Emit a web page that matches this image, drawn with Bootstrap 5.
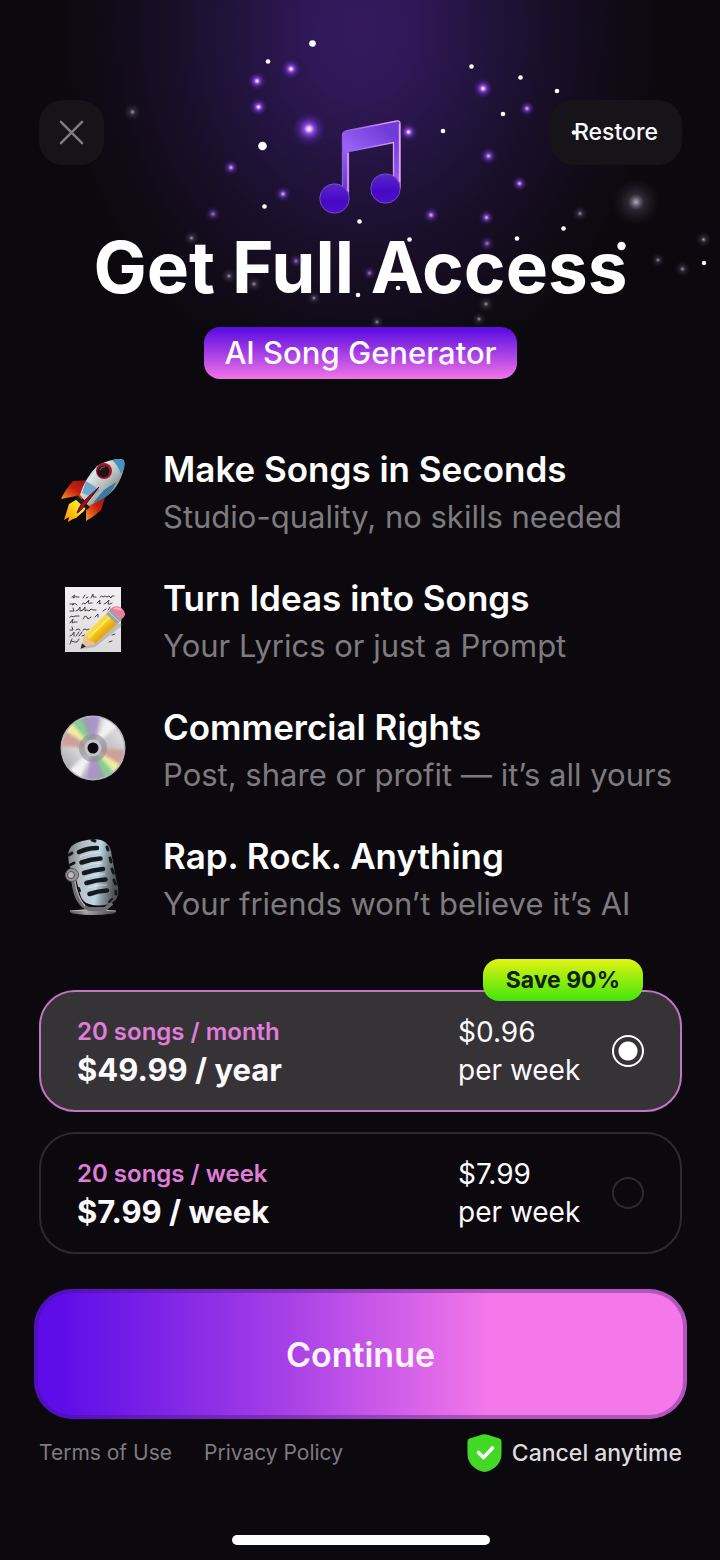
<!DOCTYPE html>
<html lang="en" data-bs-theme="dark">
<head>
<meta charset="utf-8">
<meta name="viewport" content="width=device-width, initial-scale=1">
<title>Get Full Access</title>
<link href="https://cdn.jsdelivr.net/npm/bootstrap@5.3.0/dist/css/bootstrap.min.css" rel="stylesheet">
<style>
  body { background: #0b090d; color: #fcfafd; font-family: Inter, "Liberation Sans", sans-serif; }
  .paywall { padding: 100px 38px 14px 39px; background: radial-gradient(ellipse 300px 360px at 50% 30px, #34195f 0%, #2f1857 18%, #21123a 45%, #150d20 72%, #0b090d 100%) no-repeat; }
  .stars { z-index: 2; pointer-events: none; }
  .topbar { display: grid; grid-template-columns: 1fr auto 1fr; }
  .chip { height: 65px; border: 0; border-radius: 24px; background: #161419; color: #fcfafd; font-size: 23px; font-weight: 500; }
  .chip:hover, .chip:active { background: #232027; }
  .chip-close { width: 65px; }
  .chip-restore { width: 132px; }
  .note { margin-top: 18px; }
  .headline { font-size: 71px; line-height: 80px; font-weight: 700; margin: 12px 0 20px; }
  .tagline { height: 52px; padding: 0 20px; border-radius: 16px; font-size: 31px; line-height: 52px; font-weight: 500; background: linear-gradient(#5c0fe2 5%, #a43ee4 50%, #f274e8); }
  .perks { margin: 66px 0 0; padding-left: 16px; gap: 33px; }
  .perk-icon { width: 76px; height: 80px; margin: 5px 32px 0 0; }
  .perk-title { font-size: 35px; line-height: 48px; font-weight: 600; margin: 0; }
  .perk-text { font-size: 31px; line-height: 48px; color: #7d7b7f; margin: 0; }
  .plans { margin-top: 62px; gap: 20px; }
  .plan { height: 122px; padding: 0 36px; border: 2px solid #2b2a2d; border-radius: 36px; cursor: pointer; }
  .plan:has(input:checked) { background: #353336; border-color: #c671c6; }
  .plan-quota { font-size: 24px; line-height: 38px; font-weight: 600; color: #e07ddb; }
  .plan-price { font-size: 31px; line-height: 38px; font-weight: 700; }
  .plan-week { width: 154px; font-size: 28px; line-height: 38px; }
  .plan-radio { appearance: none; width: 32px; height: 32px; margin: 0; border: 2px solid #2b2a2d; border-radius: 50%; }
  .plan-radio:checked { border-color: #fff; background: radial-gradient(circle, #fff 9px, transparent 10px); }
  .save { right: 37px; top: -33px; height: 42px; padding: 0 23px; border-radius: 16px; font-size: 23px; line-height: 42px; font-weight: 700; color: #10200a; background: linear-gradient(#e2f312, #40e60c); }
  .go { height: 130px; margin: 35px -5px 0; border: 0; border-radius: 38px; color: #fdf4fe; font-size: 34px; font-weight: 600; background: linear-gradient(90deg, #5e0de8 4%, #a53fe6 38%, #f478ea 70%); box-shadow: inset 0 0 0 4px rgba(65, 20, 120, .36); }
  .legal { margin-top: 13px; }
  .legal a { color: #7d7b7f; font-size: 21px; line-height: 42px; }
  .legal-links { gap: 32px; }
  .cancel { font-size: 23px; line-height: 42px; font-weight: 500; color: #dddbde; gap: 10px; }
  .home-bar { width: 258px; height: 10px; margin-top: 61px; background: #fff; }
</style>
</head>
<body>
<main class="paywall position-relative">

  <svg class="stars position-absolute top-0 start-0 w-100" viewBox="0 0 720 340" aria-hidden="true">
    <defs>
      <radialGradient id="violet"><stop offset="0" stop-color="#fff"/><stop offset=".14" stop-color="#e3b0ff"/><stop offset=".3" stop-color="#9452ec" stop-opacity=".85"/><stop offset=".6" stop-color="#6a32c8" stop-opacity=".4"/><stop offset="1" stop-color="#4a2090" stop-opacity="0"/></radialGradient>
      <radialGradient id="pale"><stop offset="0" stop-color="#fff"/><stop offset=".14" stop-color="#b9b0d0" stop-opacity=".8"/><stop offset=".35" stop-color="#77708a" stop-opacity=".4"/><stop offset="1" stop-color="#444050" stop-opacity="0"/></radialGradient>
    </defs>
    <g fill="url(#violet)">
      <circle cx="291" cy="69" r="10"/><circle cx="257" cy="81" r="9"/><circle cx="258.500" cy="107" r="9"/><circle cx="309" cy="129" r="17"/>
      <circle cx="483" cy="88.500" r="10"/><circle cx="408.500" cy="132" r="9"/>
      <g opacity=".75"><circle cx="231" cy="167.500" r="8"/><circle cx="283" cy="194" r="8"/><circle cx="527" cy="108.500" r="8"/><circle cx="488.500" cy="156" r="9"/><circle cx="519.500" cy="183.500" r="8"/><circle cx="431" cy="215" r="8"/><circle cx="486.500" cy="217.500" r="8"/></g>
      <g opacity=".5"><circle cx="213" cy="214" r="8"/><circle cx="487" cy="243.500" r="8"/><circle cx="296" cy="261" r="7"/><circle cx="369.500" cy="273" r="7"/></g>
    </g>
    <g fill="url(#pale)">
      <circle cx="636" cy="202" r="24" opacity=".7"/>
      <g opacity=".65"><circle cx="132.500" cy="112" r="9"/><circle cx="191.500" cy="238" r="8"/><circle cx="580" cy="213.500" r="8"/><circle cx="658" cy="260" r="7"/><circle cx="682.500" cy="269" r="8"/><circle cx="703.500" cy="239.500" r="8"/><circle cx="229" cy="276" r="8"/><circle cx="254" cy="284" r="8"/><circle cx="314" cy="298" r="7"/><circle cx="377" cy="322" r="7"/><circle cx="486" cy="304" r="8"/><circle cx="479" cy="319" r="7"/></g>
    </g>
    <g fill="#fff">
      <circle cx="312.500" cy="43.500" r="3.300"/><circle cx="262.500" cy="146" r="4.300"/><circle cx="621.500" cy="246" r="4.200"/>
      <circle cx="268" cy="61.500" r="2.300"/><circle cx="264.500" cy="206.500" r="2.300"/><circle cx="359.500" cy="221.500" r="2.300"/><circle cx="471.500" cy="66.500" r="2.300"/><circle cx="520.500" cy="77.500" r="2.300"/><circle cx="557" cy="91" r="2.300"/><circle cx="503" cy="114" r="2.300"/><circle cx="443" cy="131" r="2.300"/><circle cx="574" cy="132.500" r="2.300"/><circle cx="563.500" cy="228.500" r="2.300"/><circle cx="517" cy="238.500" r="2.300"/><circle cx="409.500" cy="239.500" r="2.300"/><circle cx="704" cy="263" r="2.200"/><circle cx="358" cy="295" r="2.300"/><circle cx="398" cy="288" r="2.300"/>
    </g>
  </svg>

  <header class="text-center">
    <div class="topbar align-items-start">
      <button type="button" class="btn chip chip-close p-0" aria-label="Close">
        <svg class="d-block mx-auto" width="25" height="25" viewBox="0 0 26 26" fill="none" stroke="#7f7d81" stroke-width="2.600" stroke-linecap="round"><path d="M2 2 24 24M24 2 2 24"/></svg>
      </button>
      <svg class="note" width="84" height="97" viewBox="0 0 84 97" aria-hidden="true">
        <defs>
          <linearGradient id="beam" x1="0" y1="1" x2=".6" y2="0"><stop offset="0" stop-color="#5f30c0"/><stop offset=".5" stop-color="#9a63f8"/><stop offset="1" stop-color="#6f3bd8"/></linearGradient>
          <linearGradient id="rim" x1="0" x2="1"><stop offset="0" stop-color="#8a5ae0"/><stop offset="1" stop-color="#e6a4f4"/></linearGradient>
          <linearGradient id="head" x1="0" y1="0" x2="0" y2="1"><stop offset="0" stop-color="#5a28cc"/><stop offset=".6" stop-color="#4608c4"/><stop offset="1" stop-color="#4c12cc"/></linearGradient>
        </defs>
        <path d="M23.500 76V17Q23.500 14 26.500 13L78 3Q81 2.500 81 5.500V70H74.500V24.500L29.500 33.500V80Z" fill="url(#beam)" stroke="url(#rim)" stroke-width="1.300"/>
        <path d="M29 35V74M80.500 6V64" stroke="#e4a4f2" stroke-width="1.400"/>
        <circle cx="15.500" cy="80.500" r="14.700" fill="url(#head)" stroke="#7648c4"/>
        <circle cx="66.500" cy="70.500" r="14.700" fill="url(#head)" stroke="#7648c4"/>
      </svg>
      <button type="button" class="btn chip chip-restore p-0 ms-auto">Restore</button>
    </div>
    <h1 class="headline text-nowrap">Get Full Access</h1>
    <div class="tagline d-inline-block align-top">AI Song Generator</div>
  </header>

  <ul class="perks list-unstyled d-flex flex-column">
    <li class="d-flex align-items-start">
      <svg class="perk-icon flex-shrink-0" viewBox="0 0 76 80" aria-hidden="true">
        <defs>
          <linearGradient id="hull" x1="0" y1="0" x2="1" y2="1"><stop offset=".1" stop-color="#5699c8"/><stop offset=".32" stop-color="#dfe6e6"/><stop offset=".55" stop-color="#b5bbb8"/><stop offset=".85" stop-color="#5b6c78"/></linearGradient>
          <linearGradient id="fin" x1="1" y1="0" x2="0" y2="1"><stop offset="0" stop-color="#8a1012"/><stop offset=".5" stop-color="#c8200f"/><stop offset="1" stop-color="#ff9a26"/></linearGradient>
          <linearGradient id="flame" x1="1" y1="0" x2="0" y2="1"><stop offset="0" stop-color="#fff6a0"/><stop offset=".45" stop-color="#ffdb1c"/><stop offset="1" stop-color="#ff8a00"/></linearGradient>
        </defs>
        <path d="M34 30 18 31Q10 40 6 49L21 46 27 50Z" fill="url(#fin)"/>
        <path d="M52 42 46 60Q40 66 31 71L31 60 36 50Z" fill="url(#fin)"/>
        <path d="M24 48 14 54 9 70 14 67 13 72 18 69 21 68 29 61 33 54Z" fill="url(#flame)"/>
        <path d="M22 45 35 57 32 60 20 49Z" fill="#1c1d22"/>
        <path d="M25 45Q30 28 42 16 54 9 66 9 71 10 69 18 64 39 50 47 41 52 34 56Z" fill="url(#hull)"/>
        <path d="M57 10Q65 8 69 10 71 16 66 24 63 15 57 10Z" fill="#4292c4"/>
        <path d="M31 31 45 40 37 47 27 43Z" fill="#6fa9d1"/>
        <path d="M49 40 61 32Q56 45 46 50L38 53Z" fill="#38799f"/>
        <path d="M44 37 31 54Q25 62 22 63 24 56 29 51Z" fill="#a5111a" stroke="#5c080d"/>
        <circle cx="49" cy="21" r="8" fill="#a51429"/><circle cx="48.500" cy="21.500" r="6" fill="#1b1416"/>
        <path d="M45 20Q46 17 50 17" fill="none" stroke="#6a4c52" stroke-width="1.500"/>
      </svg>
      <div>
        <h2 class="perk-title">Make Songs in Seconds</h2>
        <p class="perk-text">Studio-quality, no skills needed</p>
      </div>
    </li>
    <li class="d-flex align-items-start">
      <svg class="perk-icon flex-shrink-0" viewBox="0 0 76 80" aria-hidden="true">
        <defs>
          <linearGradient id="sheet" x1="0" y1="0" x2="0" y2="1"><stop offset="0" stop-color="#f3f1f3"/><stop offset="1" stop-color="#dad8da"/></linearGradient>
          <linearGradient id="wood" x1="0" y1="0" x2="1" y2="1"><stop offset="0" stop-color="#f6b91c"/><stop offset=".4" stop-color="#ffdc34"/><stop offset=".6" stop-color="#e8ac10"/><stop offset="1" stop-color="#c98706"/></linearGradient>
        </defs>
        <path d="M10 8H66V73H10Z" fill="url(#sheet)"/>
        <g fill="none" stroke="#454348" stroke-width="1" stroke-linecap="round">
          <path d="M17 18l3-2-2 3q3-2 4-1l2 0M28 19l2-3M31 19l2-1M36 19l2-4 0 3 3 0M45 18q2-2 3 0l2-1 2 1 2-1 2 2 1-2 2 0"/>
          <path d="M15 25h4l-2 1q3-3 5 0M27 25q2-2 3 0l4-4q-2 5 1 3l2 0M42 24l3-3-1 4 2-1M49 25l2-1 3-3-1 4 2 0 2-1"/>
          <path d="M15 32h4l-1-3M21 32l2-1 2-3 0 4 3-1 2-3 0 4 2-1 2 1 2-2 2 1 3 0M48 32l3-2M53 31l2-3"/>
          <path d="M15 38l2-1 1 1 2-1 2 0 2 0M28 40l2-3 2 1 1 2 3-2M40 38l3-3 0 3"/>
          <path d="M15 44l3-4-1 4 2-1 3 0"/>
          <path d="M15 51h3l-1-3M21 51l2-1 2 1M28 51l2-1 2 1 2-1"/>
          <path d="M15 57l2-1 2-3 0 4M21 57l3-4M24 57l3-4M27 57l3-1"/>
          <path d="M15 65l2-5M16 62l4 1 2 0 2-3M57 56l3-1M54 63l3-1"/>
        </g>
        <path d="M27 70 40 68 68 46 62 44Z" fill="#77747a" opacity=".35"/>
        <path d="M29 57 52 34 63 44 40 65 34 63Z" fill="url(#wood)"/>
        <path d="M33 59 56 37" stroke="#fff08a" stroke-width="1.500"/>
        <path d="M29 57 26 69 40 65Q39 62 35 62 34 57 29 57Z" fill="#e9c396"/>
        <path d="M27 64.500 25.500 70 31 67.500Z" fill="#29272a"/>
        <path d="M51 35 56 30 67 41 62 45Z" fill="#9ca1ae"/><path d="M53.500 32.500 64.500 43" stroke="#d6d9df"/>
        <path d="M55 30Q59 26 65 28 70 31 70 36 69 39 66 40Z" fill="#eb7e98"/><path d="M59 30Q62 28 66 31" stroke="#ffb2c2" stroke-width="2" fill="none"/>
      </svg>
      <div>
        <h2 class="perk-title">Turn Ideas into Songs</h2>
        <p class="perk-text">Your Lyrics or just a Prompt</p>
      </div>
    </li>
    <li class="d-flex align-items-start">
      <svg class="perk-icon flex-shrink-0" viewBox="0 0 76 80" aria-hidden="true">
        <defs>
          <linearGradient id="disc" x1="0" y1="1" x2="1" y2="0"><stop offset=".1" stop-color="#a9a8ad"/><stop offset=".35" stop-color="#d6d5d8"/><stop offset=".5" stop-color="#b0afb4"/><stop offset=".8" stop-color="#d9d8db"/></linearGradient>
          <filter id="blend" x="-20%" y="-20%" width="140%" height="140%"><feGaussianBlur stdDeviation="1.600"/></filter>
          <clipPath id="rimclip"><circle cx="38" cy="40" r="31"/></clipPath>
        </defs>
        <circle cx="38" cy="40" r="32.500" fill="#b4b3b8"/>
        <circle cx="38" cy="40" r="31" fill="url(#disc)"/>
        <g clip-path="url(#rimclip)"><g filter="url(#blend)">
          <g id="sheen">
            <path d="M38 40 24 7H36Z" fill="#9d9fae"/><path d="M38 40 33 5H46Z" fill="#aa94cc"/>
            <path d="M38 40 14 12 24 7Z" fill="#84d094"/><path d="M38 40 7 21 14 12Z" fill="#efedA0"/>
            <path d="M38 40 3 38 7 21Z" fill="#cfa09c"/><path d="M38 40 52 6 64 16Z" fill="#f1f0f3"/>
          </g>
          <use href="#sheen" transform="rotate(180 38 40)"/>
        </g></g>
        <circle cx="38" cy="40" r="14" fill="#8f8d93" opacity=".6"/>
        <circle cx="38" cy="40" r="8.500" fill="#c5c4c8"/>
        <circle cx="38" cy="40" r="5.500" fill="#0b090d"/>
      </svg>
      <div>
        <h2 class="perk-title">Commercial Rights</h2>
        <p class="perk-text text-nowrap">Post, share or profit — it’s all yours</p>
      </div>
    </li>
    <li class="d-flex align-items-start">
      <svg class="perk-icon flex-shrink-0" viewBox="0 0 76 80" aria-hidden="true">
        <defs>
          <linearGradient id="mic" x1="0" x2="1" y2=".15"><stop offset="0" stop-color="#77797c"/><stop offset=".3" stop-color="#b4bdc2"/><stop offset=".65" stop-color="#bcd6e6"/><stop offset=".8" stop-color="#87959e"/><stop offset="1" stop-color="#4f5356"/></linearGradient>
          <linearGradient id="base" x1="0" x2="1"><stop offset="0" stop-color="#4a4a4c"/><stop offset=".35" stop-color="#a6a6a8"/><stop offset="1" stop-color="#454547"/></linearGradient>
        </defs>
        <ellipse cx="38" cy="75" rx="23" ry="3" fill="url(#base)"/>
        <path d="M15 74Q38 71.500 61 74" fill="none" stroke="#b8b8ba"/>
        <path d="M18 42Q20 59 25 65 29 71 35 72H50L57 66" fill="none" stroke="#6d6d70" stroke-width="4"/>
        <path d="M20 44Q22 60 30 69" fill="none" stroke="#b5b5b8" stroke-width="1.300"/>
        <path d="M13 17Q14 7 27 4 38 1 46 3 56 6 57 20L63 51Q65 63 54 67 43 70 34 67 27 65 25 57L21 42Q17 34 14 28Z" fill="url(#mic)"/>
        <g fill="none" stroke="#15191c" stroke-width="4.600" stroke-linecap="round">
          <path d="M24 15Q33 11 42 11M26.500 25.500Q36 22 45.500 21.500M29 36Q38 33 48 32M31.500 46Q41 43 50.500 42.500M34.500 57Q43 54 52 53.500"/>
          <path stroke-width="3" d="M14 18 17 16M15 28 19 26M52 10 53 13M55 21 56 25M57 32 58.500 36M59 43 60.500 47M61 54V57M37 3 40 4"/>
          <path stroke-width="2" d="M54 65 57 62M25 54 24 51"/>
        </g>
        <g fill="none" stroke="#e2eef5" opacity=".65"><path d="M25 19.500Q34 16 44 15M27 30Q37 26 47 26M30 40.500Q40 37 50 37M33 51Q43 47 52 48"/></g>
        <circle cx="17" cy="38" r="6.500" fill="#939396" stroke="#58585b"/><circle cx="16" cy="38" r="3.500" fill="#bababd" stroke="#4e4e50"/>
      </svg>
      <div>
        <h2 class="perk-title">Rap. Rock. Anything</h2>
        <p class="perk-text">Your friends won’t believe it’s AI</p>
      </div>
    </li>
  </ul>

  <form>
    <div class="plans d-flex flex-column">
      <label class="plan d-flex align-items-center position-relative" for="plan-year">
        <span class="save position-absolute">Save 90%</span>
        <span class="d-flex flex-column me-auto">
          <span class="plan-quota">20 songs / month</span>
          <span class="plan-price">$49.99 / year</span>
        </span>
        <span class="plan-week">$0.96<br>per week</span>
        <input class="plan-radio" type="radio" name="plan" id="plan-year" checked>
      </label>
      <label class="plan d-flex align-items-center" for="plan-week">
        <span class="d-flex flex-column me-auto">
          <span class="plan-quota">20 songs / week</span>
          <span class="plan-price">$7.99 / week</span>
        </span>
        <span class="plan-week">$7.99<br>per week</span>
        <input class="plan-radio" type="radio" name="plan" id="plan-week">
      </label>
    </div>
    <div class="d-grid">
      <button type="button" class="btn go">Continue</button>
    </div>
  </form>

  <footer>
    <div class="legal d-flex justify-content-between align-items-center">
      <nav class="legal-links d-flex" aria-label="Legal">
        <a class="text-decoration-none" href="#">Terms of Use</a>
        <a class="text-decoration-none" href="#">Privacy Policy</a>
      </nav>
      <div class="cancel d-flex align-items-center">
        <svg width="35" height="38" viewBox="0 0 35 38" aria-hidden="true"><path d="M15.500.6Q17.500-.2 19.500.6L32.500 4.500Q34.500 5.200 34.500 7.500V20C34.500 29 28 35 20 37.500Q17.500 38.300 15 37.500C7 35 .5 29 .5 20V7.500Q.5 5.200 2.500 4.500Z" fill="#43d825"/><path d="M11.500 18.500 16.500 23.500 25.500 14" fill="none" stroke="#fff" stroke-width="3.600" stroke-linecap="round" stroke-linejoin="round"/></svg>
        <span>Cancel anytime</span>
      </div>
    </div>
    <div class="home-bar rounded-pill mx-auto"></div>
  </footer>
</main>
<script src="https://cdn.jsdelivr.net/npm/bootstrap@5.3.0/dist/js/bootstrap.bundle.min.js"></script>
</body>
</html>
